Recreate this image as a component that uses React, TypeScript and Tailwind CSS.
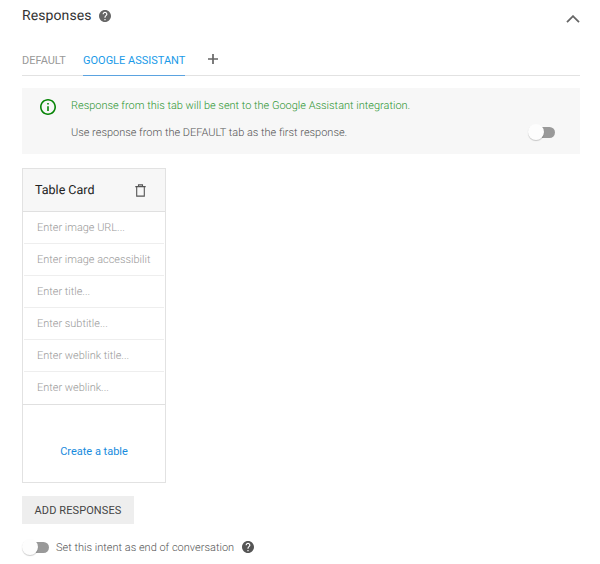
import React from 'react';

const FIELDS = [
  'Enter image URL...',
  'Enter image accessibilit',
  'Enter title...',
  'Enter subtitle...',
  'Enter weblink title...',
  'Enter weblink...',
];

function HelpIcon({ className }: { className: string }) {
  return (
    <svg viewBox="2 2 20 20" fill="currentColor" className={className}>
      <path d="M12 2C6.48 2 2 6.48 2 12s4.48 10 10 10 10-4.48 10-10S17.52 2 12 2zm1 17h-2v-2h2v2zm2.07-7.75-.9.92C13.45 12.9 13 13.5 13 15h-2v-.5c0-1.1.45-2.1 1.17-2.83l1.24-1.26c.37-.36.59-.86.59-1.41 0-1.1-.9-2-2-2s-2 .9-2 2H8c0-2.21 1.79-4 4-4s4 1.79 4 4c0 .88-.36 1.68-.93 2.25z" />
    </svg>
  );
}

function Toggle() {
  return (
    <span role="switch" aria-checked="false" className="flex h-4 w-7 shrink-0 items-center">
      <span className="z-10 size-4 shrink-0 rounded-full bg-[#fdfdfd] shadow-[0_1px_1px_rgba(0,0,0,0.2)]" />
      <span className="-ml-3.5 h-[11px] w-[25px] shrink-0 rounded-full bg-[#999]" />
    </span>
  );
}

export default function App() {
  return (
    <main className="h-[564px] w-[600px] overflow-hidden bg-white pr-5 pl-[22px] font-['Roboto','Liberation_Sans',sans-serif] text-[11px] text-[#555] [text-rendering:geometricPrecision]">
      <header className="flex h-8 items-center">
        <h1 className="w-[69px] pt-px text-[14px] tracking-[0.1px] whitespace-nowrap text-[#333]">Responses</h1>
        <HelpIcon className="ml-2 size-3 text-[#666]" />
        <svg viewBox="0 0 14 8" fill="none" stroke="#666" strokeWidth="1.8" className="mt-1.5 ml-auto h-2 w-3.5">
          <path d="M1 7.2 7 1.2l6 6" />
        </svg>
      </header>

      <nav className="flex h-11 items-end border-b border-[#e2e2e2]">
        <button className="-mb-px h-[26px] w-[44px] border-b border-transparent pb-[3px] text-left whitespace-nowrap text-[#999]">DEFAULT</button>
        <button className="-mb-px ml-[17px] h-[26px] w-[102px] border-b border-[#5ba3e0] pb-[3px] text-left whitespace-nowrap text-[#1a9ae8]">GOOGLE ASSISTANT</button>
        <svg viewBox="0 0 10 10" stroke="#666" strokeWidth="1.7" className="mb-[11px] ml-[23px] size-2.5">
          <path d="M5 0v10M0 5h10" />
        </svg>
      </nav>

      <section className="mt-3 flex h-[66px] bg-[#f7f7f7] pl-[18px]">
        <svg viewBox="2 2 20 20" fill="#078507" className="mt-[11px] size-4">
          <path d="M11 7h2v2h-2zm0 4h2v6h-2zm1-9C6.48 2 2 6.48 2 12s4.48 10 10 10 10-4.480 10-10S17.520 2 12 2zm0 18c-4.410 0-8-3.590-8-8s3.590-8 8-8 8 3.590 8 8-3.590 8-8 8z" />
        </svg>
        <div className="ml-[15px] flex-1 pt-2.5">
          <p className="h-[18px] text-[10.97px] leading-4 font-light whitespace-nowrap text-[#2e9633]">Response from this tab will be sent to the Google Assistant integration.</p>
          <div className="mt-2 flex h-4 items-center justify-between pr-6">
            <p className="pt-[3px] text-[10.97px] font-light whitespace-nowrap">Use response from the DEFAULT tab as the first response.</p>
            <Toggle />
          </div>
        </div>
      </section>

      <section className="mt-3.5 h-[315px] w-36 border border-[#e2e2e2]">
        <header className="flex h-[43px] items-center justify-between border-b border-[#e0e0e0] bg-[#f7f7f7] pr-[19px] pl-3">
          <h2 className="pt-[3px] text-[12.5px] whitespace-nowrap text-[#222]">Table Card</h2>
          <svg viewBox="0 0 11 13" fill="none" stroke="#555" strokeWidth="1.1" className="h-[13px] w-[11px]">
            <path d="M.3 2.600h10.400M3.500 2.400V.900h4v1.500M1.700 2.800v9.300h7.600V2.800" />
          </svg>
        </header>
        <ul className="border-b border-[#e0e0e0]">
          {FIELDS.map((field) => (
            <li key={field} className="mx-px flex h-8 items-center border-b border-[#eee] pt-px pl-[13px] text-[10.95px] font-light text-[#999] last:border-0">
              <span className="whitespace-nowrap">{field}</span>
            </li>
          ))}
        </ul>
        <button className="mt-[39px] block w-full text-center leading-4 text-[#178bdd]">Create a table</button>
      </section>

      <button className="mt-[13px] block h-7 w-28 bg-[#eee] pt-0.5 text-[11px] tracking-[0.1px] whitespace-nowrap text-[#444]">ADD RESPONSES</button>

      <footer className="mt-[15px] flex h-4 items-center">
        <Toggle />
        <span className="ml-1.5 w-[178px] pt-0.5 font-light whitespace-nowrap">Set this intent as end of conversation</span>
        <HelpIcon className="ml-2 size-3 text-[#555]" />
      </footer>
    </main>
  );
}
